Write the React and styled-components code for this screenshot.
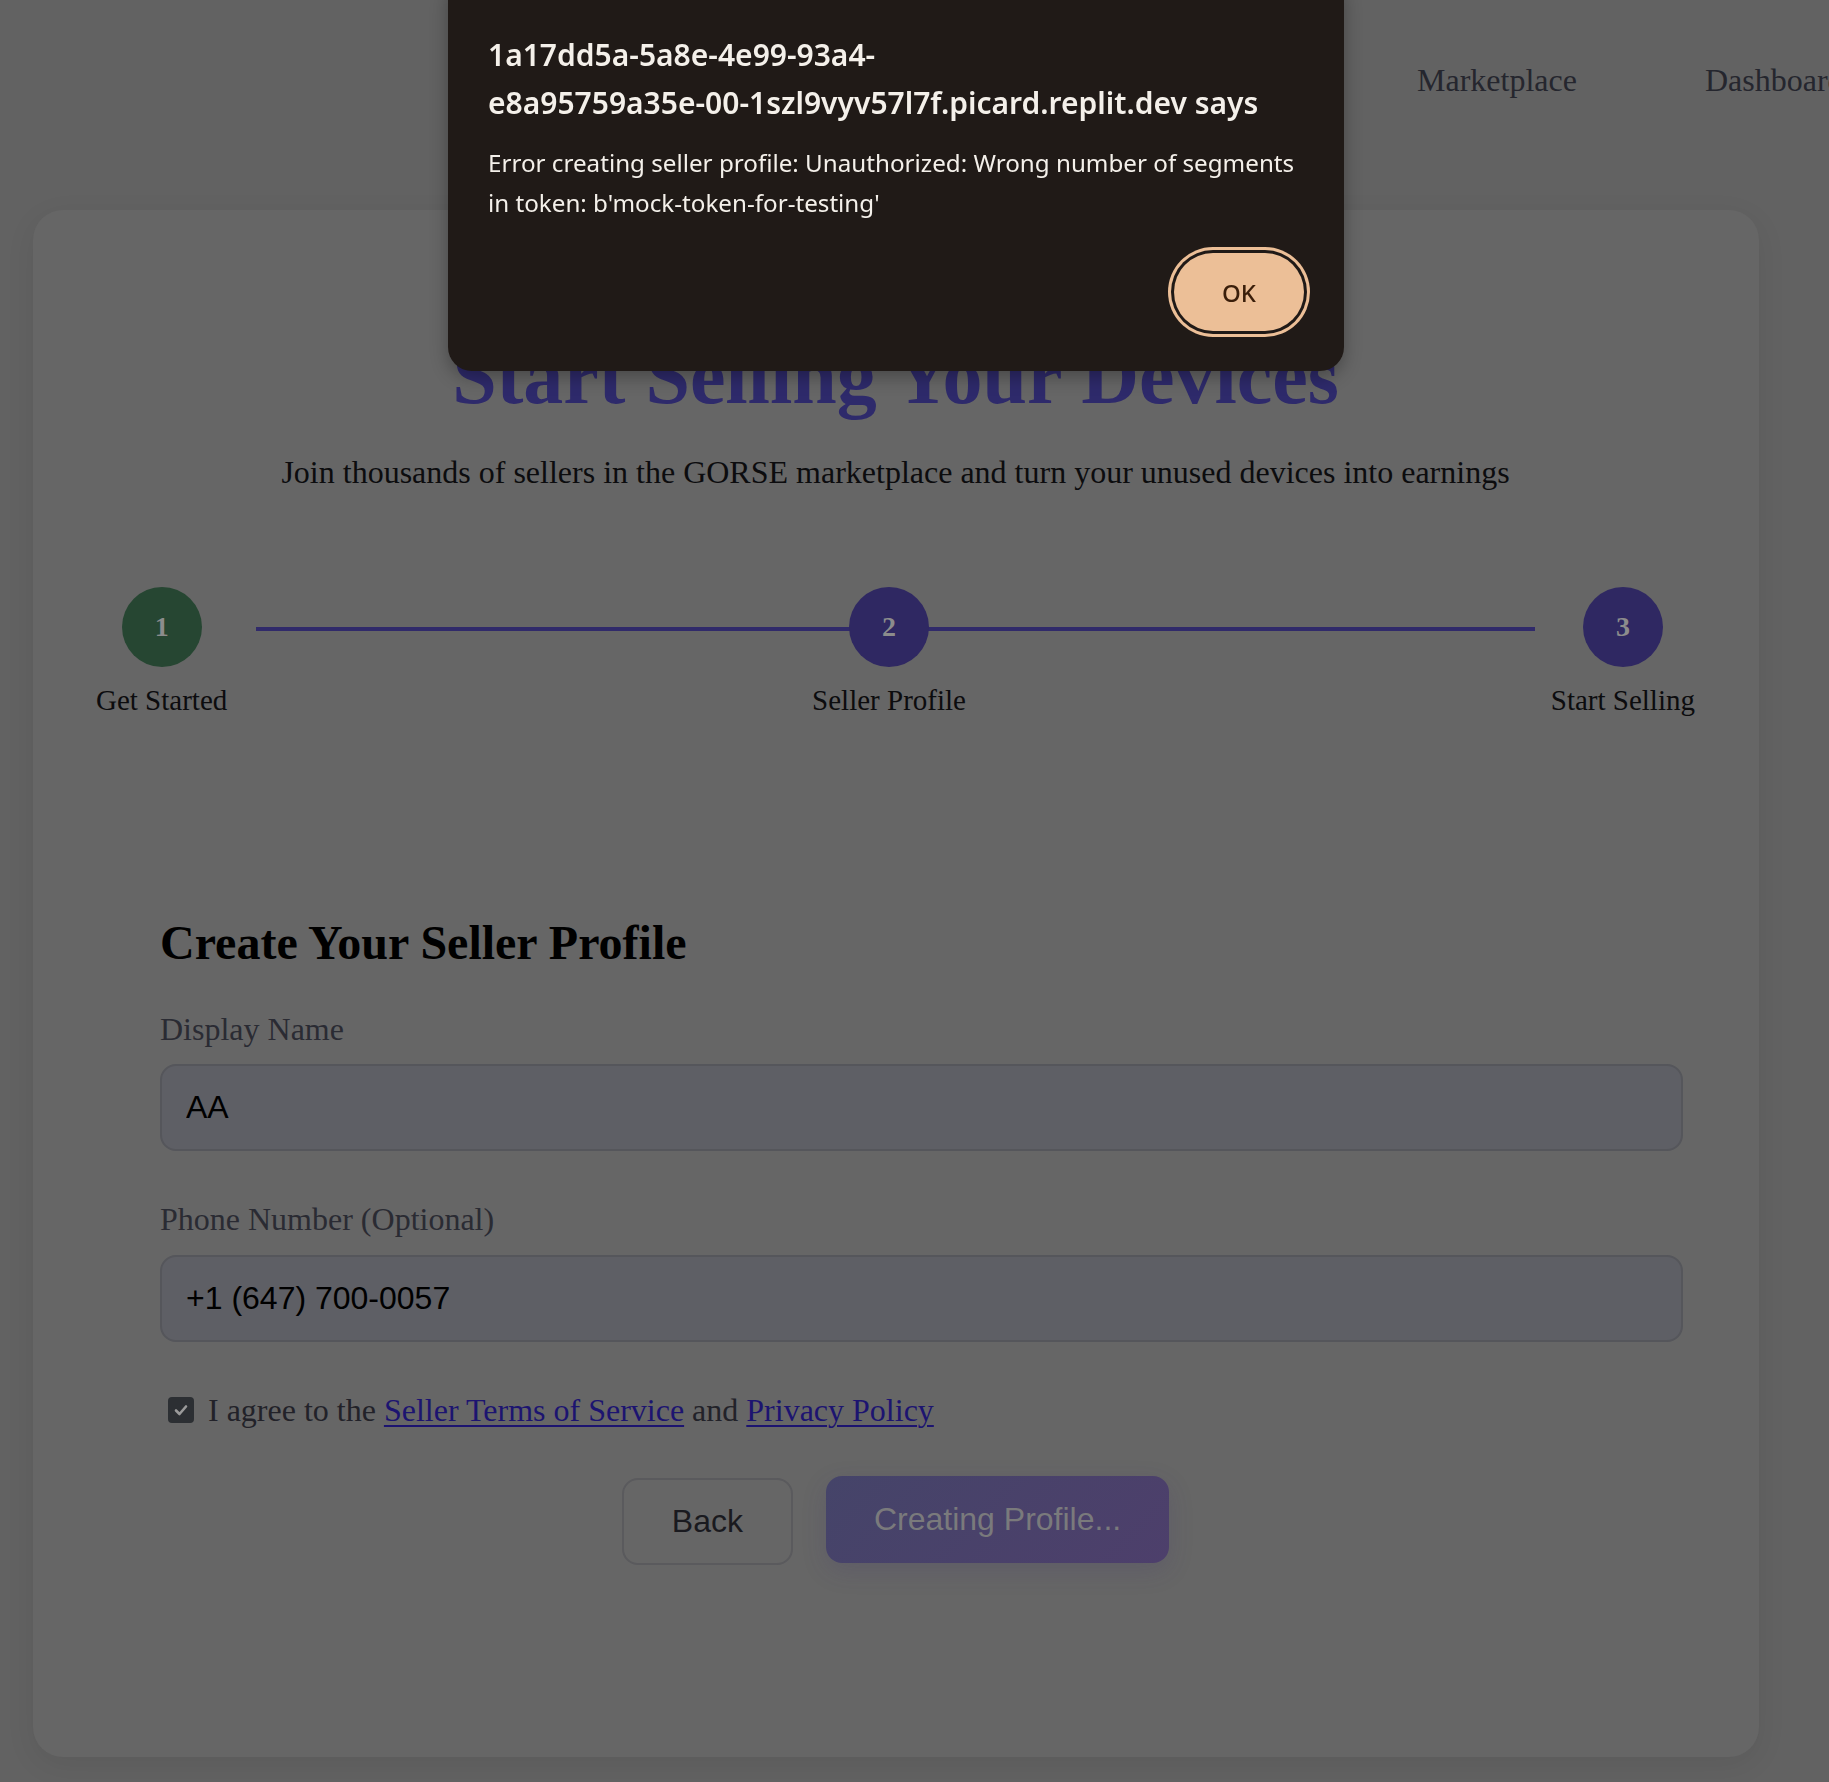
import styled, { createGlobalStyle } from 'styled-components';

const GlobalStyle = createGlobalStyle`
  html, body {
    margin: 0;
    padding: 0;
    overflow: hidden;
    background: #626262;
  }

  body {
    font-family: "Liberation Serif", "Times New Roman", serif;
    color: #111;
  }

  * {
    box-sizing: border-box;
  }
`;

const steps = [
  { num: 1, label: 'Get Started', done: true },
  { num: 2, label: 'Seller Profile' },
  { num: 3, label: 'Start Selling' },
];

const App = () => {
  return (
    <>
      <GlobalStyle />
      <StPage>
        <StHeader>
          <StNavLink>Marketplace</StNavLink>
          <StNavLink>Dashboard</StNavLink>
        </StHeader>

        <StCard>
          <StTitle>Start Selling Your Devices</StTitle>
          <StSubtitle>
            Join thousands of sellers in the GORSE marketplace and turn your unused devices into earnings
          </StSubtitle>

          <StStepper>
            <StStepLine />
            {steps.map((step) => (
              <StStep key={step.num}>
                <StStepCircle $done={step.done}>{step.num}</StStepCircle>
                <StStepLabel>{step.label}</StStepLabel>
              </StStep>
            ))}
          </StStepper>

          <StForm>
            <h2>Create Your Seller Profile</h2>

            <StField>
              <StLabel>Display Name</StLabel>
              <StInput type="text" defaultValue="AA" />
            </StField>

            <StField>
              <StLabel>Phone Number (Optional)</StLabel>
              <StInput type="text" defaultValue="+1 (647) 700-0057" />
            </StField>

            <StAgree>
              <StCheck>
                <svg width="16" height="16" viewBox="0 0 16 16">
                  <path d="M3 8.5 L6.5 12 L13 4.5" fill="none" stroke="#9a9a9a" strokeWidth="2.6" strokeLinecap="round" strokeLinejoin="round" />
                </svg>
              </StCheck>
              <span>
                I agree to the <StLink>Seller Terms of Service</StLink> and <StLink>Privacy Policy</StLink>
              </span>
            </StAgree>

            <StActions>
              <StBackButton>Back</StBackButton>
              <StSubmitButton>Creating Profile...</StSubmitButton>
            </StActions>
          </StForm>
        </StCard>
      </StPage>

      <StDialog>
        <StDialogTitle>
          1a17dd5a-5a8e-4e99-93a4-
          <br />
          e8a95759a35e-00-1szl9vyv57l7f.picard.replit.dev says
        </StDialogTitle>
        <StDialogBody>
          Error creating seller profile: Unauthorized: Wrong number of segments
          <br />
          in token: b'mock-token-for-testing'
        </StDialogBody>
        <StDialogActions>
          <StOkButton>OK</StOkButton>
        </StDialogActions>
      </StDialog>
    </>
  );
};
export default App;

const StPage = styled.div`
  width: 1829px;
  height: 1782px;
  overflow: hidden;
`;

const StHeader = styled.header`
  display: flex;
  align-items: center;
  gap: 128px;
  height: 160px;
  padding-left: 1417px;
  white-space: nowrap;
`;

const StNavLink = styled.span`
  font-size: 32px;
  color: #25262e;
`;

const StCard = styled.section`
  width: 1726px;
  margin: 50px 0 0 33px;
  padding: 118px 64px 192px 63px;
  background: #666666;
  border-radius: 30px;
  box-shadow: 0 8px 30px rgba(0, 0, 0, 0.07);
`;

const StTitle = styled.h1`
  margin: 0;
  font-size: 80px;
  line-height: 1.2;
  font-weight: 700;
  text-align: center;
  color: #2e2a6b;
`;

const StSubtitle = styled.p`
  margin: 29px 0 0;
  font-size: 32px;
  line-height: 1.2;
  text-align: center;
  color: #0c0c0e;
`;

const StStepper = styled.div`
  position: relative;
  display: flex;
  justify-content: space-between;
  margin-top: 96px;
`;

const StStepLine = styled.div`
  position: absolute;
  top: 40px;
  left: 10%;
  right: 10%;
  height: 4px;
  background: #302a6a;
`;

const StStep = styled.div`
  position: relative;
  display: flex;
  flex-direction: column;
  align-items: center;
  gap: 16px;
`;

const StStepCircle = styled.div`
  display: flex;
  align-items: center;
  justify-content: center;
  width: 80px;
  height: 80px;
  border-radius: 50%;
  background: ${({ $done }) => ($done ? '#264632' : '#2f2862')};
  color: #8c8c8c;
  font-size: 28px;
  font-weight: 700;
`;

const StStepLabel = styled.span`
  font-size: 29px;
  line-height: 1.2;
  color: #0c0c0e;
  white-space: nowrap;
`;

const StForm = styled.div`
  margin-top: 196px;
  padding: 0 64px;

  & h2 {
    margin: 0 0 38px;
    font-size: 48px;
    line-height: 1.2;
    font-weight: 700;
    color: #000;
  }
`;

const StField = styled.div`
  display: flex;
  flex-direction: column;
  gap: 16px;
  margin-bottom: 49px;
`;

const StLabel = styled.label`
  font-size: 32px;
  line-height: 1.2;
  color: #2a2b33;
`;

const StInput = styled.input`
  box-sizing: content-box;
  width: 100%;
  padding: 22px 24px;
  border: 2px solid #55565b;
  border-radius: 16px;
  background: #5e5f65;
  font-family: "Liberation Sans", Arial, sans-serif;
  font-size: 32px;
  line-height: 39px;
  color: #000;
  outline: none;
`;

const StAgree = styled.div`
  display: flex;
  align-items: center;
  gap: 14px;
  margin-top: 4px;
  padding-left: 8px;
  font-size: 32px;
  line-height: 1.2;
  color: #222229;
`;

const StCheck = styled.span`
  display: flex;
  align-items: center;
  justify-content: center;
  width: 26px;
  height: 26px;
  border-radius: 4px;
  background: #2c2f33;
`;

const StLink = styled.a`
  color: #1c1470;
  text-decoration: underline;
  text-decoration-thickness: 2px;
  text-underline-offset: 4px;
`;

const StActions = styled.div`
  display: flex;
  justify-content: center;
  align-items: flex-start;
  gap: 33px;
  margin-top: 47px;
`;

const StBackButton = styled.button`
  height: 87px;
  margin-top: 2px;
  padding: 0 48px;
  border: 2px solid #5a5a5d;
  border-radius: 16px;
  background: transparent;
  font-family: "Liberation Sans", Arial, sans-serif;
  font-size: 32px;
  color: #1a1a1f;
`;

const StSubmitButton = styled.button`
  height: 87px;
  padding: 0 48px;
  border: none;
  border-radius: 16px;
  background: linear-gradient(135deg, #454469, #4d3f6b);
  box-shadow: 0 8px 24px rgba(60, 50, 110, 0.18);
  font-family: "Liberation Sans", Arial, sans-serif;
  font-size: 32px;
  color: #7a7a7c;
`;

const StDialog = styled.div`
  position: fixed;
  top: -24px;
  left: 448px;
  width: 896px;
  padding: 55px 40px 40px;
  background: #201a17;
  border-radius: 24px;
  box-shadow: 0 6px 18px rgba(0, 0, 0, 0.3);
  font-family: "Noto Sans", "Open Sans", sans-serif;
  color: #f4f0ea;
`;

const StDialogTitle = styled.div`
  font-size: 30px;
  font-weight: 600;
  line-height: 48px;
  white-space: nowrap;
`;

const StDialogBody = styled.div`
  margin-top: 16px;
  font-size: 24.2px;
  line-height: 40px;
  white-space: nowrap;
`;

const StDialogActions = styled.div`
  display: flex;
  justify-content: flex-end;
  margin-top: 30px;
`;

const StOkButton = styled.button`
  width: 130px;
  height: 78px;
  border: none;
  border-radius: 999px;
  background: #ecbf97;
  box-shadow: 0 0 0 3px #201a17, 0 0 0 6px #ecbf97;
  font-family: "Noto Sans", "Open Sans", sans-serif;
  font-size: 24px;
  font-weight: 500;
  color: #3a1e0a;
`;
